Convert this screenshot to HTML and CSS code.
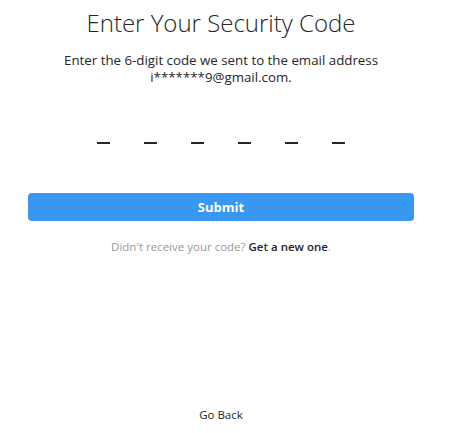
FILE: index.html
```html
<!DOCTYPE html>
<html>
<head>
<meta charset="utf-8">
<link rel="stylesheet" href="styles.css">
</head>
<body>
<div class="page">
  <h1 class="title">Enter Your Security Code</h1>
  <p class="desc">Enter the 6-digit code we sent to the email address<br>i*******9@gmail.com.</p>
  <div class="code">
    <span class="slot"></span><span class="slot"></span><span class="slot"></span><span class="slot"></span><span class="slot"></span><span class="slot"></span>
  </div>
  <button class="submit">Submit</button>
  <p class="resend">Didn't receive your code? <a class="link">Get a new one</a>.</p>
  <div class="spacer"></div>
  <a class="back">Go Back</a>
</div>
</body>
</html>
```
FILE: styles.css
```css
html, body {
  margin: 0;
  padding: 0;
  background: #fff;
}
body {
  font-family: "Open Sans", "Noto Sans", sans-serif;
  color: #262626;
}
.page {
  width: 442px;
  height: 433px;
  display: flex;
  flex-direction: column;
  align-items: center;
  box-sizing: border-box;
}
.title {
  margin: 7px 0 0;
  font-size: 24px;
  font-weight: 300;
  line-height: 32px;
  color: #262626;
}
.desc {
  margin: 13px 0 0;
  font-size: 13.3px;
  line-height: 17px;
  text-align: center;
}
.code {
  margin-top: 56px;
  display: flex;
  gap: 34px;
  height: 4px;
}
.slot {
  width: 13px;
  height: 2px;
  background: #262626;
}
.submit {
  margin-top: 47px;
  width: 386px;
  height: 28px;
  border: 0;
  border-radius: 4px;
  background: #3897f0;
  color: #fff;
  font-family: inherit;
  font-weight: 700;
  font-size: 13px;
  padding: 0;
}
.resend {
  margin: 18px 0 0;
  font-size: 11.5px;
  line-height: 16px;
  color: #999;
}
.link {
  color: #262626;
  font-weight: 600;
}
.spacer {
  flex: 1;
}
.back {
  margin-bottom: 10px;
  font-size: 11.5px;
  line-height: 16px;
  color: #262626;
  font-weight: 400;
}
```
